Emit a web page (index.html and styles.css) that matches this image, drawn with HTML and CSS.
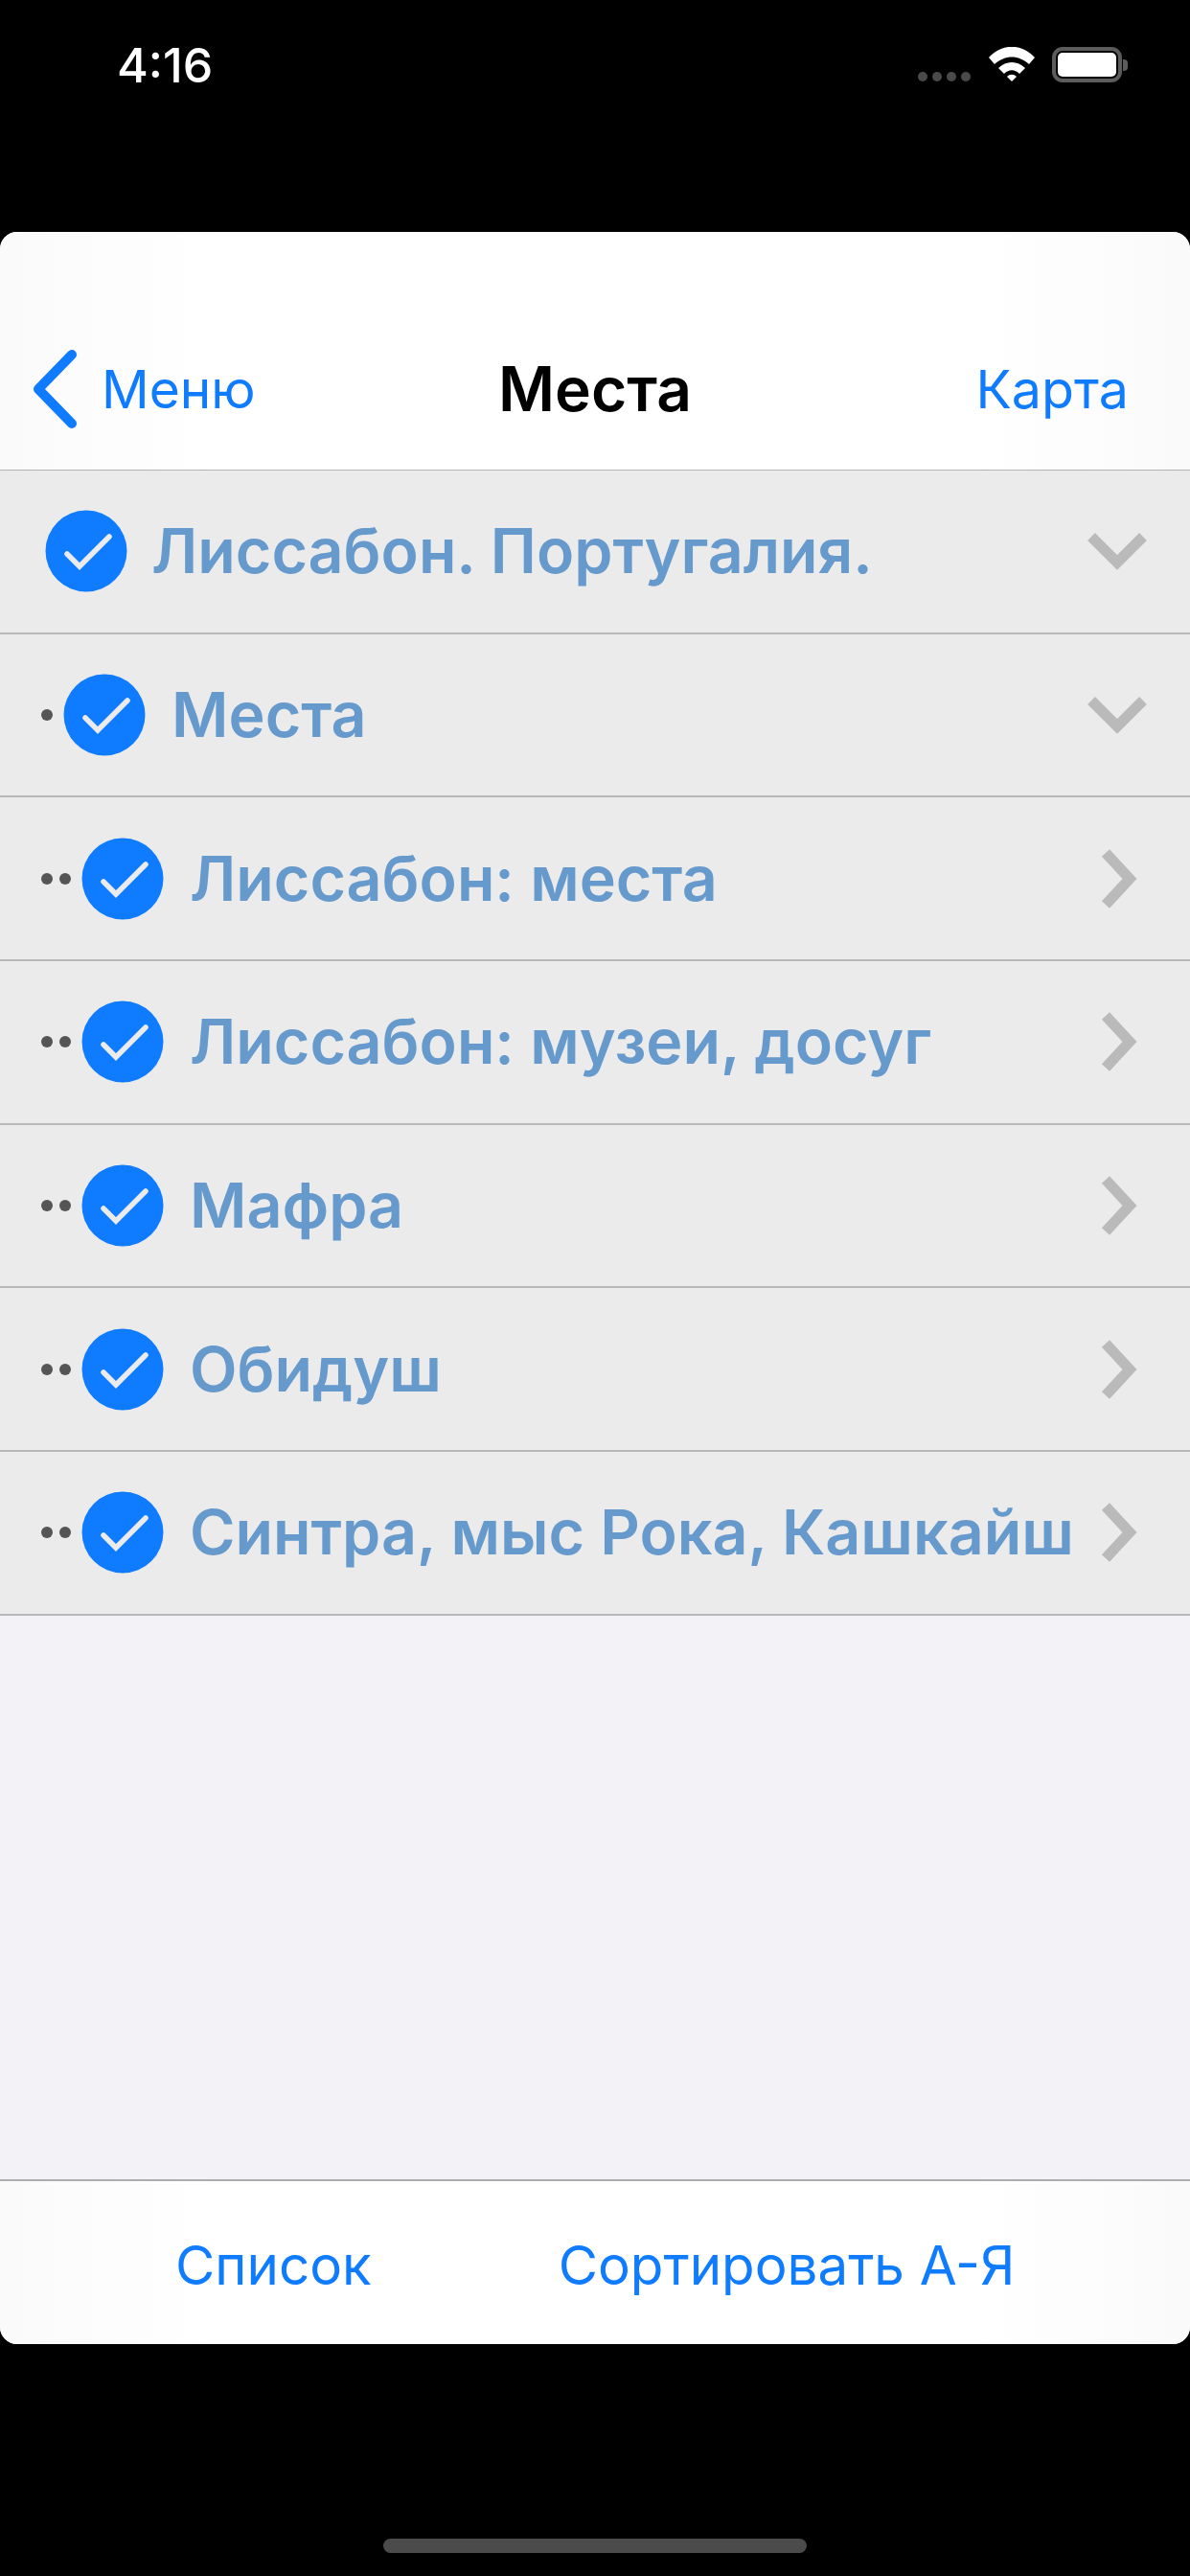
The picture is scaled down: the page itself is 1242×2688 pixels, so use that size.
FILE: index.html
```html
<!DOCTYPE html>
<html lang="ru">
<head>
  <meta charset="utf-8" />
  <meta name="viewport" content="width=device-width, initial-scale=1" />
  <title>Места</title>
  <link rel="stylesheet" href="styles.css">
</head>
<body>
  <svg class="defs" width="0" height="0">
    <symbol id="check" viewBox="0 0 86 86">
      <circle cx="43" cy="43" r="42.5" fill="#0f7bff" />
      <path d="M23 46 L36 59 L67 28" fill="none" stroke="#ebebeb" stroke-width="5.5" stroke-linecap="round" />
    </symbol>
    <symbol id="down" viewBox="0 0 62 40">
      <path d="M4 5 L31 32 L58 5" fill="none" stroke="#bababa" stroke-width="11" />
    </symbol>
    <symbol id="right" viewBox="0 0 40 64">
      <path d="M5 5 L30 32 L5 59" fill="none" stroke="#bababa" stroke-width="11" />
    </symbol>
  </svg>

  <div class="status">
    <span class="time">4:16</span>
    <div class="status-icons">
      <div class="signal"><i></i><i></i><i></i><i></i></div>
      <svg class="wifi" width="48" height="36" viewBox="0 0 48 36">
        <path d="M0 11 C14 -4 34 -4 48 11 L42 18 C31 8 17 8 6 18 Z" fill="#fff" />
        <path d="M10 22 C18 14 30 14 38 22 L32 28 C27 23 21 23 16 28 Z" fill="#fff" />
        <path d="M19 31 C22 28 26 28 29 31 L24 36 Z" fill="#fff" />
      </svg>
      <div class="battery"><div class="battery-fill"></div></div>
      <div class="battery-cap"></div>
    </div>
  </div>

  <div class="card">
    <header class="nav">
      <a class="nav-back">
        <svg width="50" height="84" viewBox="0 0 50 84">
          <path d="M41 6 L6 42 L41 78" fill="none" stroke="#0f7bff" stroke-width="10" stroke-linecap="round" stroke-linejoin="round" />
        </svg>
        <span>Меню</span>
      </a>
      <h1>Места</h1>
      <a class="nav-action">Карта</a>
    </header>

    <main class="list">
      <div class="row">
        <svg class="check"><use href="#check" /></svg>
        <span class="label">Лиссабон. Португалия.</span>
        <svg class="chev-down"><use href="#down" /></svg>
      </div>
      <div class="row">
        <div class="dots"><i></i></div>
        <svg class="check"><use href="#check" /></svg>
        <span class="label">Места</span>
        <svg class="chev-down"><use href="#down" /></svg>
      </div>
      <div class="row">
        <div class="dots"><i></i><i></i></div>
        <svg class="check"><use href="#check" /></svg>
        <span class="label">Лиссабон: места</span>
        <svg class="chev-right"><use href="#right" /></svg>
      </div>
      <div class="row">
        <div class="dots"><i></i><i></i></div>
        <svg class="check"><use href="#check" /></svg>
        <span class="label">Лиссабон: музеи, досуг</span>
        <svg class="chev-right"><use href="#right" /></svg>
      </div>
      <div class="row">
        <div class="dots"><i></i><i></i></div>
        <svg class="check"><use href="#check" /></svg>
        <span class="label">Мафра</span>
        <svg class="chev-right"><use href="#right" /></svg>
      </div>
      <div class="row">
        <div class="dots"><i></i><i></i></div>
        <svg class="check"><use href="#check" /></svg>
        <span class="label">Обидуш</span>
        <svg class="chev-right"><use href="#right" /></svg>
      </div>
      <div class="row">
        <div class="dots"><i></i><i></i></div>
        <svg class="check"><use href="#check" /></svg>
        <span class="label">Синтра, мыс Рока, Кашкайш</span>
        <svg class="chev-right"><use href="#right" /></svg>
      </div>
    </main>

    <footer class="toolbar">
      <a>Список</a>
      <a>Сортировать А-Я</a>
    </footer>
  </div>

  <div class="home-bar"></div>
</body>
</html>
```

FILE: styles.css
```css
body {
  margin: 0;
  width: 1242px;
  height: 2688px;
  background-color: #000;
  font-family: 'Inter', 'Liberation Sans', sans-serif;
  overflow: hidden;
}

.defs {
  display: block;
  height: 0;
}

.status {
  height: 242px;
  box-sizing: border-box;
  padding: 44px 65px 0 122px;
  display: flex;
  justify-content: space-between;
  align-items: flex-start;
  color: #fff;
}

.time {
  font-size: 50px;
  font-weight: 500;
  line-height: 48px;
}

.status-icons {
  display: flex;
  align-items: flex-end;
  margin-top: 5px;
}

.signal {
  display: flex;
  gap: 5px;
  margin-right: 19px;
  margin-bottom: 1px;
}

.signal i {
  width: 10px;
  height: 10px;
  border-radius: 50%;
  background-color: #4a4a4a;
}

.wifi {
  margin-right: 18px;
  margin-bottom: 1px;
}

.battery {
  width: 73px;
  height: 37px;
  box-sizing: border-box;
  border: 4px solid #5c5c5c;
  border-radius: 11px;
  padding: 2px;
}

.battery-fill {
  height: 100%;
  background-color: #fff;
  border-radius: 5px;
}

.battery-cap {
  width: 5px;
  height: 12px;
  margin: 0 0 12px 1px;
  background-color: #5c5c5c;
  border-radius: 0 4px 4px 0;
}

.card {
  height: 2204px;
  display: flex;
  flex-direction: column;
  background-color: #f2f2f7;
  border-radius: 18px;
  overflow: hidden;
}

.nav {
  height: 249px;
  flex: none;
  box-sizing: border-box;
  padding: 122px 34px 0;
  display: grid;
  grid-template-columns: 1fr auto 1fr;
  align-items: start;
  background: linear-gradient(90deg, #fafafa, #fff 18%, #fff 82%, #fafafa);
  border-bottom: 1px solid #b2b2b2;
}

.nav-back {
  display: flex;
  align-items: flex-start;
  gap: 22px;
  color: #0f7bff;
  font-size: 55px;
  line-height: 84px;
}

.nav-back svg {
  flex: none;
}

.nav h1 {
  margin: 0;
  color: #000;
  font-size: 64px;
  font-weight: 600;
  line-height: 84px;
}

.nav-action {
  justify-self: end;
  margin-right: 30px;
  color: #0f7bff;
  font-size: 55.5px;
  line-height: 84px;
}

.list {
  flex: 1;
}

.row {
  height: 170.7px;
  box-sizing: border-box;
  display: flex;
  align-items: center;
  padding: 0 45px 0 47px;
  background-color: #ebebeb;
  border-bottom: 2px solid #b8b8b8;
}

.dots {
  display: flex;
  flex: none;
  gap: 7px;
  margin: 0 11px 0 -4px;
}

.dots i {
  width: 12px;
  height: 12px;
  border-radius: 50%;
  background-color: #555;
}

.check {
  flex: none;
  width: 86px;
  height: 86px;
  margin-right: 25px;
}

.label {
  flex: 1;
  color: #6699cc;
  font-size: 64.5px;
  font-weight: 600;
  white-space: nowrap;
}

.dots ~ .label {
  margin-left: 2px;
}

.chev-down {
  flex: none;
  width: 62px;
  height: 40px;
}

.chev-right {
  flex: none;
  width: 40px;
  height: 64px;
  margin-right: 8px;
}

.toolbar {
  height: 172px;
  flex: none;
  box-sizing: border-box;
  padding: 4px 0 0 183px;
  display: flex;
  align-items: center;
  gap: 195px;
  background: linear-gradient(90deg, #fafafa, #fff 18%, #fff 82%, #fafafa);
  border-top: 2px solid #adadad;
  color: #0f7bff;
  font-size: 56.5px;
}

.home-bar {
  width: 442px;
  height: 15px;
  margin: 203px 0 0 400px;
  background-color: #4b4b4b;
  border-radius: 8px;
}
```
